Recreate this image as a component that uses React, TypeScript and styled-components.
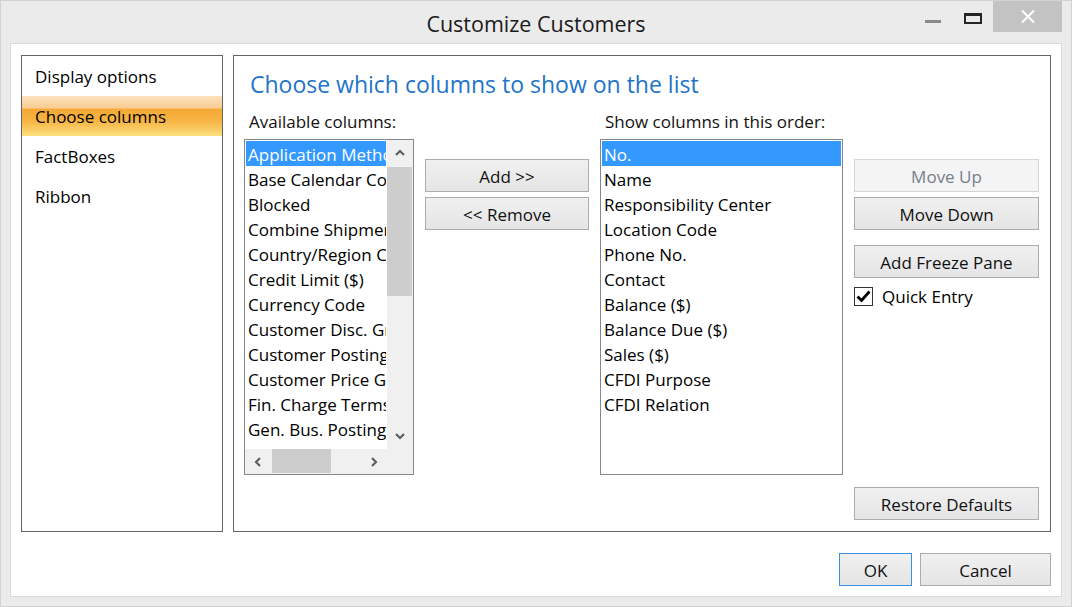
import React from "react";
import styled, { createGlobalStyle, css } from "styled-components";

const GlobalStyle = createGlobalStyle`
  html, body { margin: 0; padding: 0; background: #ebebeb; }
  * { box-sizing: border-box; }
  body { font-family: "Open Sans", "Noto Sans", "Liberation Sans", sans-serif; font-size: 17px; color: #000; }
`;

const Frame = styled.div`
  width: 1072px;
  height: 607px;
  border: 1px solid #d2d2d2;
  background: #ebebeb;
  display: flex;
  flex-direction: column;
`;

const TitleBar = styled.div`
  height: 42px;
  display: grid;
  grid-template-columns: 1fr auto 1fr;
  align-items: start;
`;

const Title = styled.div`
  font-size: 21.5px;
  line-height: 26px;
  padding-top: 10px;
  color: #1a1a1a;
`;

const Controls = styled.div`
  justify-self: end;
  display: flex;
  margin-right: 9px;
`;

const CtrlBtn = styled.div<{ $w: number; $close?: boolean }>`
  width: ${(p) => p.$w}px;
  height: 31px;
  display: flex;
  align-items: center;
  justify-content: center;
  background: ${(p) => (p.$close ? "#c3c3c3" : "transparent")};
`;

const MinGlyph = styled.div`
  width: 16px;
  height: 3px;
  background: #8a8a8a;
  margin-top: 10px;
`;

const MaxGlyph = styled.div`
  width: 18px;
  height: 11px;
  border: 2px solid #252525;
  border-top-width: 3px;
  margin-top: 3px;
`;

const Client = styled.div`
  flex: 1;
  margin: 0 9px 9px 9px;
  background: #fff;
  border: 1px solid #d9d9d9;
  padding: 11px 10px 10px 10px;
  display: flex;
  flex-direction: column;
  gap: 21px;
`;

const Main = styled.div`
  height: 477px;
  display: flex;
  gap: 10px;
`;

const Nav = styled.div`
  width: 202px;
  border: 1px solid #646464;
  display: flex;
  flex-direction: column;
`;

const NavItem = styled.div<{ $active?: boolean }>`
  height: 40px;
  line-height: 41px;
  padding-left: 13px;
  font-size: 17px;
  ${(p) =>
    p.$active &&
    css`
      background: linear-gradient(
        to bottom,
        #fde2bd 0%,
        #f9cc92 30%,
        #f5a834 33%,
        #f7b748 65%,
        #fde07f 100%
      );
    `}
`;

const Panel = styled.div`
  flex: 1;
  border: 1px solid #646464;
  padding: 13px 11px 11px 10px;
  display: flex;
  flex-direction: column;
`;

const Heading = styled.div`
  font-size: 23px;
  line-height: 30px;
  color: #1e74c9;
  padding-left: 6px;
  margin-bottom: 13px;
`;

const PanelGrid = styled.div`
  flex: 1;
  display: grid;
  grid-template-columns: 170px 164px 243px 185px;
  grid-template-rows: 20px 1fr;
  column-gap: 11px;
  row-gap: 7px;
`;

const ColLabel = styled.div<{ $col: number }>`
  grid-column: ${(p) => p.$col};
  grid-row: 1;
  font-size: 17px;
  line-height: 20px;
  padding-left: 5px;
  color: #111;
  white-space: nowrap;
`;

const ListBox = styled.div<{ $scroll?: boolean }>`
  grid-row: 2;
  height: 336px;
  border: 1px solid #828790;
  display: grid;
  grid-template-columns: ${(p) => (p.$scroll ? "1fr 26px" : "1fr")};
  grid-template-rows: ${(p) => (p.$scroll ? "1fr 25px" : "1fr")};
  overflow: hidden;
`;

const ListContent = styled.div`
  padding: 1px;
  overflow: hidden;
`;

const ListRow = styled.div<{ $selected?: boolean }>`
  height: 25px;
  line-height: 27px;
  padding-left: 2px;
  font-size: 17px;
  white-space: nowrap;
  overflow: hidden;
  background: ${(p) => (p.$selected ? "#3399ff" : "transparent")};
  color: ${(p) => (p.$selected ? "#fff" : "#000")};
`;

const VScroll = styled.div`
  background: #f0f0f0;
  display: flex;
  flex-direction: column;
`;

const HScroll = styled.div`
  background: #f0f0f0;
  display: flex;
`;

const Corner = styled.div`
  background: #f0f0f0;
`;

const ArrowBtn = styled.div`
  width: 26px;
  height: 26px;
  flex: none;
  display: flex;
  align-items: center;
  justify-content: center;
`;

const VTrack = styled.div`
  flex: 1;
  padding-top: 1px;
`;

const VThumb = styled.div`
  height: 129px;
  background: #cdcdcd;
  margin-right: 1px;
`;

const HTrack = styled.div`
  flex: 1;
  padding-left: 1px;
`;

const HThumb = styled.div`
  width: 59px;
  height: 24px;
  background: #cdcdcd;
`;

const ButtonCol = styled.div`
  grid-row: 2;
  padding-top: 20px;
  display: flex;
  flex-direction: column;
  gap: 5px;
`;

const Button = styled.div<{ $disabled?: boolean; $default?: boolean; $w?: number; $mt?: string }>`
  height: 33px;
  ${(p) => (p.$w ? `width: ${p.$w}px;` : "")}
  ${(p) => (p.$mt !== undefined ? `margin-top: ${p.$mt};` : "")}
  flex: none;
  display: flex;
  align-items: center;
  justify-content: center;
  padding-top: 2px;
  font-size: 17px;
  border: 1px solid ${(p) => (p.$disabled ? "#d5d5d5" : p.$default ? "#3c8fe0" : "#acacac")};
  background: ${(p) =>
    p.$disabled ? "#f4f4f4" : "linear-gradient(to bottom, #f0f0f0, #e5e5e5)"};
  color: ${(p) => (p.$disabled ? "#76808c" : "#111")};
`;

const CheckRow = styled.div`
  display: flex;
  align-items: center;
  gap: 9px;
  margin-top: 2px;
  font-size: 17px;
`;

const CheckBox = styled.div`
  width: 19px;
  height: 19px;
  border: 1px solid #333;
  background: #fff;
  display: flex;
  align-items: center;
  justify-content: center;
`;

const Footer = styled.div`
  display: flex;
  justify-content: flex-end;
  gap: 8px;
`;

const Chevron = ({ dir }: { dir: "up" | "down" | "left" | "right" }) => {
  const paths: Record<string, string> = {
    up: "M1 6 L5 2 L9 6",
    down: "M1 2 L5 6 L9 2",
    left: "M6 1 L2 5 L6 9",
    right: "M2 1 L6 5 L2 9",
  };
  const vertical = dir === "up" || dir === "down";
  return (
    <svg width={vertical ? 10 : 8} height={vertical ? 8 : 10} viewBox={vertical ? "0 0 10 8" : "0 0 8 10"}>
      <path d={paths[dir]} fill="none" stroke="#606060" strokeWidth="2.2" />
    </svg>
  );
};

const available = [
  "Application Method",
  "Base Calendar Code",
  "Blocked",
  "Combine Shipments",
  "Country/Region Code",
  "Credit Limit ($)",
  "Currency Code",
  "Customer Disc. Group",
  "Customer Posting Group",
  "Customer Price Group",
  "Fin. Charge Terms Code",
  "Gen. Bus. Posting Group",
  "Global Dimension 1 Code",
];

const shown = [
  "No.",
  "Name",
  "Responsibility Center",
  "Location Code",
  "Phone No.",
  "Contact",
  "Balance ($)",
  "Balance Due ($)",
  "Sales ($)",
  "CFDI Purpose",
  "CFDI Relation",
];

const navItems = ["Display options", "Choose columns", "FactBoxes", "Ribbon"];

export default function App() {
  return (
    <>
      <GlobalStyle />
      <Frame>
        <TitleBar>
          <span />
          <Title>Customize Customers</Title>
          <Controls>
            <CtrlBtn $w={40}>
              <MinGlyph />
            </CtrlBtn>
            <CtrlBtn $w={40}>
              <MaxGlyph />
            </CtrlBtn>
            <CtrlBtn $w={69} $close>
              <svg width="16" height="13" viewBox="0 0 16 13">
                <path d="M2 0.5 L14 12.5 M14 0.5 L2 12.5" stroke="#fff" strokeWidth="2" fill="none" />
              </svg>
            </CtrlBtn>
          </Controls>
        </TitleBar>
        <Client>
          <Main>
            <Nav>
              {navItems.map((n) => (
                <NavItem key={n} $active={n === "Choose columns"}>
                  {n}
                </NavItem>
              ))}
            </Nav>
            <Panel>
              <Heading>Choose which columns to show on the list</Heading>
              <PanelGrid>
                <ColLabel $col={1}>Available columns:</ColLabel>
                <ColLabel $col={3}>Show columns in this order:</ColLabel>
                <ListBox $scroll>
                  <ListContent>
                    {available.map((a, i) => (
                      <ListRow key={a} $selected={i === 0}>
                        {a}
                      </ListRow>
                    ))}
                  </ListContent>
                  <VScroll>
                    <ArrowBtn>
                      <Chevron dir="up" />
                    </ArrowBtn>
                    <VTrack>
                      <VThumb />
                    </VTrack>
                    <ArrowBtn>
                      <Chevron dir="down" />
                    </ArrowBtn>
                  </VScroll>
                  <HScroll>
                    <ArrowBtn>
                      <Chevron dir="left" />
                    </ArrowBtn>
                    <HTrack>
                      <HThumb />
                    </HTrack>
                    <ArrowBtn>
                      <Chevron dir="right" />
                    </ArrowBtn>
                  </HScroll>
                  <Corner />
                </ListBox>
                <ButtonCol>
                  <Button>Add &gt;&gt;</Button>
                  <Button>&lt;&lt; Remove</Button>
                </ButtonCol>
                <ListBox>
                  <ListContent>
                    {shown.map((s, i) => (
                      <ListRow key={s} $selected={i === 0}>
                        {s}
                      </ListRow>
                    ))}
                  </ListContent>
                </ListBox>
                <ButtonCol>
                  <Button $disabled>Move Up</Button>
                  <Button>Move Down</Button>
                  <Button $mt="10px">Add Freeze Pane</Button>
                  <CheckRow>
                    <CheckBox>
                      <svg width="15" height="13" viewBox="0 0 15 13">
                        <path d="M1.5 6.5 L5.5 10.5 L13.5 1.5" fill="none" stroke="#000" strokeWidth="2.8" />
                      </svg>
                    </CheckBox>
                    Quick Entry
                  </CheckRow>
                  <Button $mt="auto">Restore Defaults</Button>
                </ButtonCol>
              </PanelGrid>
            </Panel>
          </Main>
          <Footer>
            <Button $w={73} $default>
              OK
            </Button>
            <Button $w={131}>Cancel</Button>
          </Footer>
        </Client>
      </Frame>
    </>
  );
}
